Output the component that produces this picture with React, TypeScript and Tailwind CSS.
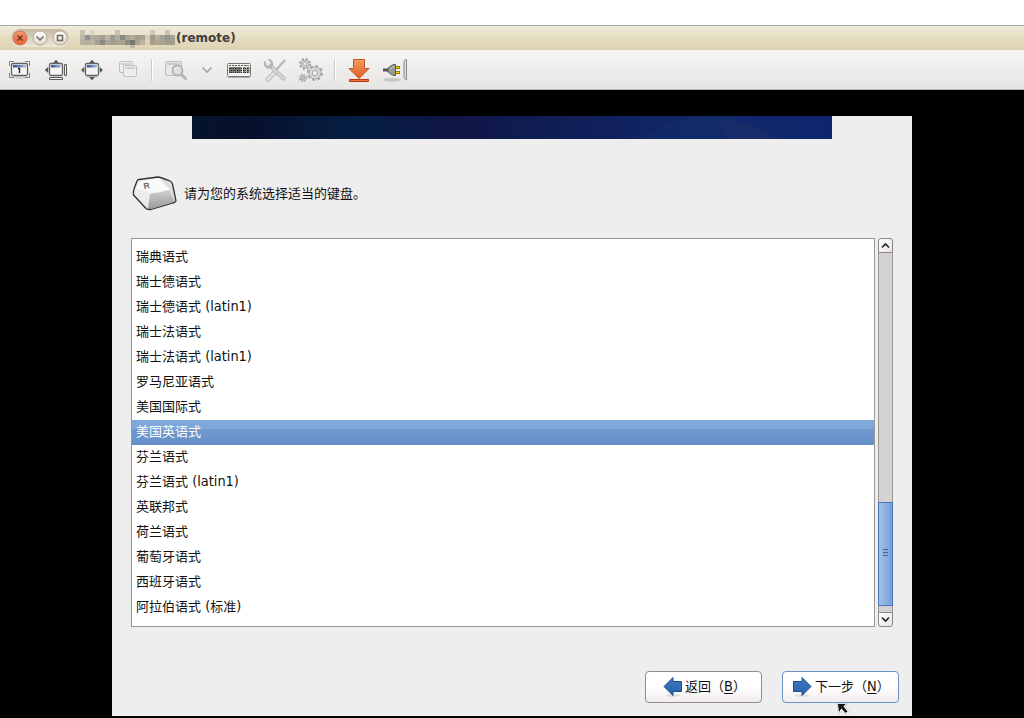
import React from "react";

const FONT = "font-['DejaVu_Sans','Noto_Sans_CJK_SC',sans-serif]";

const layouts = [
  ["瑞典语式"],
  ["瑞士德语式"],
  ["瑞士德语式", "(latin1)"],
  ["瑞士法语式"],
  ["瑞士法语式", "(latin1)"],
  ["罗马尼亚语式"],
  ["美国国际式"],
  ["美国英语式"],
  ["芬兰语式"],
  ["芬兰语式", "(latin1)"],
  ["英联邦式"],
  ["荷兰语式"],
  ["葡萄牙语式"],
  ["西班牙语式"],
  ["阿拉伯语式", "(标准)"],
];
const selected = 7;

const mosaic = [
  ["#c9c3b0", "", "#ddd6c3", "", "", "", "", "#c8c2af", "", "", "", "", "", "", "#ccc6b3", "", "", "#cac3b0", ""],
  ["#bdb7a5", "#8a9294", "#b5ad9b", "#aea898", "#a49e8f", "#beb6a2", "#9a9a92", "#b2a995", "#85898a", "#a9a291", "#b4ac98", "#a29d90", "#a8a291", "#d6cdb4", "#9e9a8d", "#b8af9b", "#a2a198", "#8f9491", "#a7a090"],
  ["#b8b19d", "#b4ad99", "#b9b19c", "#a49f90", "#8b8981", "#aca492", "#a49d8c", "#aaa291", "#aba392", "#8f8c83", "#777671", "#aaa28f", "#bcb39c", "#dcd2b6", "#a49d8c", "#aea692", "#aaa390", "#a19b8c", "#a49d8c"],
  ["", "", "", "", "", "", "", "", "", "", "#c3baa0", "", "", "", "", "", "", "", ""],
];

function Win({ x, y, w, h }: { x: number; y: number; w: number; h: number }) {
  return (
    <g>
      <rect x={x + 0.5} y={y + 0.5} width={w - 1} height={h - 1} rx="1.5" fill="#f4f4f3" stroke="#60635f" strokeWidth="1.3" />
      <rect x={x + 2} y={y + 2} width={w - 4} height="2.5" fill="url(#winbar)" />
    </g>
  );
}

function Ico({ x, w, className = "", children }: { x: number; w: number; className?: string; children: React.ReactNode }) {
  return (
    <svg className={"shrink-0 " + className} width={w} height="26" viewBox={`${x} 57 ${w} 26`}>
      {children}
    </svg>
  );
}

function Gear({ cx, cy, r }: { cx: number; cy: number; r: number }) {
  return (
    <g fill="none" stroke="#a9a9a7">
      <circle cx={cx} cy={cy} r={r} strokeWidth="2.6" strokeDasharray={`${r * 0.42} ${r * 0.3654}`} />
      <circle cx={cx} cy={cy} r={r - 0.8} fill="#d8d8d6" strokeWidth="1" />
      <circle cx={cx} cy={cy} r={r * 0.4} fill="#eeeeec" strokeWidth="1" />
    </g>
  );
}

function Toolbar() {
  return (
    <div className="flex h-10 items-center border-b border-[#b6b4b1] bg-linear-to-b from-[#f6f5f4] to-[#e6e5e3] pl-2">
      <Ico x={8} w={24}>
        <defs>
          <linearGradient id="winbar">
            <stop offset="0" stopColor="#2c4f8f" />
            <stop offset="1" stopColor="#a8c0df" />
          </linearGradient>
        </defs>
        <ellipse cx="20" cy="77.5" rx="8" ry="1.5" fill="#00000018" />
        <path d="M9.5 66V61.5H14M25 61.5h4.5V66M29.5 73v4.5H25M14 77.5H9.500V73" fill="none" stroke="#80827f" />
        <Win x={11} y={63} w={17} h={13} />
        <path d="M18 68.5h1.500V73" fill="none" stroke="#222" strokeWidth="1.4" />
      </Ico>
      <Ico x={44} w={26} className="ml-3">
        <path d="M53.500 63 56 60l2.500 3zM48 67.500 45 70l3 2.500z" fill="#555753" stroke="#555753" strokeWidth=".5" />
        <Win x={49} y={63} w={14} h={13} />
        <path d="M64.500 64.500h2v11h-2zM49.500 77.500h13v2h-13z" fill="#eee" stroke="#5c5f5a" />
      </Ico>
      <Ico x={80} w={24} className="ml-2.5">
        <path d="M89.500 63 92 60l2.500 3zM84 67.500 81.300 70l2.700 2.500zM100 67.500l2.700 2.500-2.700 2.500zM89.500 77.300 92 80l2.500-2.700z" fill="#555753" stroke="#555753" strokeWidth=".5" />
        <ellipse cx="92" cy="77" rx="7" ry="1.2" fill="#00000018" />
        <Win x={85} y={63} w={14} h={13} />
      </Ico>
      <Ico x={118} w={22} className="ml-3.5">
        <g fill="#eeeeec" stroke="#c1c1bf">
          <rect x="119.5" y="61.5" width="13" height="11" rx="1.5" />
          <path d="M121 64h10" stroke="#d0d0ce" strokeWidth="2" />
          <rect x="123.5" y="65.5" width="13" height="11" rx="1.5" />
          <path d="M125 68h10" stroke="#d0d0ce" strokeWidth="2" />
        </g>
      </Ico>
      <div className="ml-[11px] h-[22px] w-0.5 border-r border-white bg-[#cdcbc8]" />
      <Ico x={164} w={26} className="ml-[11px]">
        <g fill="none" stroke="#bcbcba">
          <rect x="165.5" y="61.5" width="16" height="14" rx="1.5" fill="#e8e8e6" />
          <path d="M167 64h13" stroke="#cacac8" strokeWidth="2" />
          <path d="m181.500 74.500 4 4" stroke="#b5b5b3" strokeWidth="3" strokeLinecap="round" />
          <circle cx="177.5" cy="70.5" r="5" fill="#dededc" stroke="#b1b1af" strokeWidth="1.8" />
          <path d="M174.500 70a3 3 0 0 1 3-2.500" stroke="#f7f7f5" />
        </g>
      </Ico>
      <Ico x={200} w={14} className="ml-2.5">
        <path d="m202.500 67.500 4.500 4.500 4.500-4.500" fill="none" stroke="#a6a6a4" strokeWidth="1.7" />
      </Ico>
      <Ico x={226} w={26} className="ml-3">
        <rect x="227.5" y="63.5" width="23" height="13" rx="1" fill="#f2f2f1" stroke="#777975" />
        <path d="M229 65.500h17" stroke="#555" strokeDasharray="2 1" />
        <path d="M229 67h12.500v6H229zM243 67h2.500v6H243zM246.500 67h3v6h-3z" fill="#777975" />
        <path d="M229 68.500h20M229 70.500h20M229 72.500h20" stroke="#333" strokeDasharray="1 1" />
        <path d="M228 77.500h22" stroke="#aaa" />
        <path d="M246 65.500h3" stroke="#55a64b" />
      </Ico>
      <Ico x={262} w={26} className="ml-2.5">
        <g fill="none" strokeLinecap="round">
          <path d="m284.500 60.500-8 9" stroke="#b9b9b7" strokeWidth="2.4" />
          <path d="m276 71.500-8.500 8" stroke="#bdbdbb" strokeWidth="4.5" />
          <path d="m276 71.500-8.500 8" stroke="#e0e0de" strokeWidth="2.7" />
          <path d="m270.500 66 13 12.500" stroke="#b4b4b2" strokeWidth="4.4" />
          <path d="m270.500 66 13 12.500" stroke="#d4d4d2" strokeWidth="2.600" />
          <path d="M265 62.500c-.5 4 3 6 5.500 4.500s2-5.500-1-7" stroke="#b6b6b4" strokeWidth="2.4" />
        </g>
      </Ico>
      <Ico x={298} w={26} className="ml-2.5">
        <Gear cx={305} cy={64} r={4.8} />
        <Gear cx={315} cy={73} r={6.8} />
        <Gear cx={303} cy={78} r={3} />
      </Ico>
      <div className="ml-[10px] h-[22px] w-0.5 border-r border-white bg-[#cdcbc8]" />
      <Ico x={348} w={22} className="ml-3">
        <defs>
          <linearGradient id="orange" x2="0" y2="1">
            <stop offset="0" stopColor="#eca15f" />
            <stop offset="1" stopColor="#e85820" />
          </linearGradient>
        </defs>
        <path d="M353.500 59.500h11v9h4.500l-10 10-10-10h4.500z" fill="url(#orange)" stroke="#c7532a" />
        <path d="M349.500 79.500h19v2h-19z" fill="#ef7443" stroke="#b83710" />
      </Ico>
      <Ico x={382} w={26} className="ml-3">
        <ellipse cx="392" cy="79.8" rx="9" ry="1.7" fill="#00000028" />
        <path d="M383 70h6" stroke="#555753" strokeWidth="3" />
        <path d="M388 68c2-1 3-3.500 7.500-3.500v11c-4.500 0-5.500-2.500-7.500-3.500z" fill="#969894" stroke="#555753" />
        <path d="M390.500 69c2-1 2-2.500 4-2.500" stroke="#ddd" fill="none" />
        <path d="M395.500 67.500h4.500M395.500 72.500h4.500" stroke="#725f00" strokeWidth="3" />
        <path d="M396 67.500h3.500M396 72.500h3.500" stroke="#edd400" strokeWidth="1.3" />
        <path d="M406.500 59.500v20h-1l-1.500-2V62l1.500-2.500z" fill="#ddd" stroke="#888a85" />
      </Ico>
    </div>
  );
}

function TitleBar() {
  return (
    <div className="flex h-[25px] items-center border-t border-[#aaa8a6] bg-linear-to-b from-[#f0ebdc] via-[#e5dcc1] to-[#ddd3b3] pl-2.5">
      <svg width="60" height="20" viewBox="10 28 60 20">
        <defs>
          <linearGradient id="pill" x2="0" y2="1">
            <stop offset="0" stopColor="#c5b9a2" />
            <stop offset="1" stopColor="#eee8d9" />
          </linearGradient>
          <linearGradient id="knob" x2="0" y2="1">
            <stop offset="0" stopColor="#fff" />
            <stop offset="1" stopColor="#ddd8cf" />
          </linearGradient>
          <linearGradient id="close" x2="0" y2="1">
            <stop offset="0" stopColor="#f59a72" />
            <stop offset="1" stopColor="#ed6034" />
          </linearGradient>
        </defs>
        <rect x="11" y="29" width="58" height="18" rx="9" fill="url(#pill)" />
        <circle cx="20" cy="38" r="7" fill="url(#close)" stroke="#bc6a4c" strokeWidth=".8" />
        <circle cx="40" cy="38" r="7" fill="url(#knob)" stroke="#a79d8c" strokeWidth=".8" />
        <circle cx="60" cy="38" r="7" fill="url(#knob)" stroke="#a79d8c" strokeWidth=".8" />
        <g fill="none" stroke="#74695e" strokeWidth="1.5">
          <path d="m17.500 35.500 5 5m0-5-5 5" stroke="#713823" />
          <path d="m36.500 36.500 3.500 3.500 3.500-3.500" />
          <path d="M57.500 35.500h5v5h-5z" />
        </g>
      </svg>
      <svg className="ml-2.5" width="95" height="20" viewBox="0 0 95 20">
        {mosaic.map((row, r) => row.map((c, i) => c && <rect key={`${r}-${i}`} x={i * 5} y={2 + r * 5} width="5" height="5" fill={c} />))}
      </svg>
      <span className="ml-px text-[12px] leading-[16px] font-bold text-[#3f3f3f]">(remote)</span>
    </div>
  );
}

function KeyCap() {
  return (
    <svg width="46" height="38" viewBox="132 175 46 38">
      <defs>
        <linearGradient id="keyfront" x2="0" y2="1">
          <stop offset="0" stopColor="#d2d2d2" />
          <stop offset="1" stopColor="#9a9a9a" />
        </linearGradient>
      </defs>
      <path d="M137 180.500 159 177l13 4 4 21-25 7.500h-4L133.500 194l.5-5z" fill="#e4e4e4" />
      <path d="M138 181.500 134.500 190v4l14 14 1.500-15-10-6z" fill="#ededed" />
      <path d="m150 193.500 19-4 6 12.500-25 7h-2z" fill="url(#keyfront)" />
      <path d="m160 178 11.500 4 4 19-6-11.500z" fill="#dedede" />
      <path d="m139 181.500 20-3.500 11 11.500q-10 3.500-20 4-6-5-14-4z" fill="#fafafa" />
      <path d="M139 179.500 158 177q2 0 12 4 2 1 2.500 3l3.500 17q-1 1.500-3 2l-22 6.500q-3 .5-5-1L133.500 195q-.5-3 .5-6l3-8q.5-1.500 2-1.500z" fill="none" stroke="#333" strokeWidth="1.3" strokeLinejoin="round" />
      <text x="143.500" y="188.5" fontSize="8.5" fontWeight="bold" fill="#6a6a6a" fontFamily="Liberation Sans" transform="rotate(-9 147 185) skewX(0)">R</text>
    </svg>
  );
}

function Arrow({ right = false }: { right?: boolean }) {
  return (
    <svg width="20" height="22" viewBox="0 0 20 22" className="shrink-0">
      <defs>
        <linearGradient id="blue" x2="0" y2="1">
          <stop offset="0" stopColor="#3e78c0" />
          <stop offset="1" stopColor="#2862ac" />
        </linearGradient>
      </defs>
      <ellipse cx="10" cy="19.5" rx="7" ry="1.5" fill="#00000018" />
      <path transform={right ? "matrix(-1 0 0 1 20 0)" : undefined} d="m1 10.500 9-9v4h8.500v10H10v4z" fill="url(#blue)" stroke="#1d4c8c" strokeLinejoin="round" />
    </svg>
  );
}

function Chevron({ down = false }: { down?: boolean }) {
  return (
    <div className={"flex h-[15px] items-center justify-center border border-[#8e8788] bg-linear-to-br from-white to-[#e7e4e5] " + (down ? "rounded-b-[3px]" : "rounded-t-[3px]")}>
      <svg width="9" height="7" viewBox="0 0 9 7">
        <path d={down ? "m1 1.500 3.500 3.500 3.500-3.500" : "m1 5.500 3.500-3.500 3.500 3.500"} fill="none" stroke="#222" strokeWidth="1.6" />
      </svg>
    </div>
  );
}

function Latin({ children }: { children: React.ReactNode }) {
  return <span className="font-['DejaVu_Sans_Condensed','DejaVu_Sans','Noto_Sans_CJK_SC',sans-serif] text-[14.4px] [font-stretch:condensed]">{children}</span>;
}

export default function App() {
  return (
    <div className={"relative flex h-[718px] w-[1024px] flex-col overflow-hidden bg-white pt-[25px] " + FONT}>
      <TitleBar />
      <Toolbar />
      <div className="flex flex-1 justify-center bg-black pt-[26px] pb-0.5">
        <main className="flex w-[800px] flex-col bg-[#eeeeee] text-[13px] text-[#111]">
          <svg className="ml-20 block" width="640" height="23" viewBox="0 0 640 23">
            <defs>
              <linearGradient id="banner">
                <stop offset="0" stopColor="#05142a" />
                <stop offset=".1" stopColor="#07112e" />
                <stop offset=".25" stopColor="#071d42" />
                <stop offset=".4" stopColor="#0e1847" />
                <stop offset=".6" stopColor="#101f58" />
                <stop offset=".8" stopColor="#10286c" />
                <stop offset="1" stopColor="#10266c" />
              </linearGradient>
            </defs>
            <rect width="640" height="23" fill="url(#banner)" />
            <path d="M108 0c5 12 15 20 35 23h100V0z" fill="#051f45" opacity=".25" />
            <path d="M190 0c-8 10 20 5 40 23h72c6-8 6-16 0-23z" fill="#170f45" opacity=".25" />
            <path d="M450 23c15-14 38-22 65-22 30 0 55 9 72 22z" fill="#14306a" opacity=".4" />
            <path d="M525 5c25 0 44 6 60 18h-48z" fill="#2a2e68" opacity=".25" />
          </svg>
          <div className="mt-9 flex h-[38px] items-center pl-5">
            <KeyCap />
            <span className="ml-1.5 leading-[20px]">请为您的系统选择适当的键盘。</span>
          </div>
          <div className="mt-[25px] flex h-[389px] pl-[19px]">
            <ul className="w-[744px] border border-[#9c9596] bg-white pt-[6px]">
              {layouts.map(([name, variant], i) => (
                <li
                  key={i}
                  className={"h-[25px] pl-1 leading-[23px] whitespace-pre " + (i === selected ? "bg-linear-to-b from-[#7ea7da] from-36% via-[#7099d0] via-37% to-[#6690c8] text-white" : "")}
                >
                  {name}
                  {variant === "(latin1)" ? <> <Latin>{variant}</Latin></> : variant ? <> <Latin>(</Latin>标准<Latin>)</Latin></> : null}
                </li>
              ))}
            </ul>
            <div className="ml-[3px] flex w-[15px] flex-col">
              <Chevron />
              <div className="h-[249px] border-x border-[#9c9596] bg-[#d5d2d3]" />
              <div className="flex h-[104px] flex-col items-center justify-center gap-0.5 border border-[#4878b4] bg-linear-to-r from-[#9fc1eb] to-[#76a0d8] pb-[3px]">
                <i className="h-px w-[5px] bg-[#3d6698]" />
                <i className="h-px w-[5px] bg-[#3d6698]" />
                <i className="h-px w-[5px] bg-[#3d6698]" />
              </div>
              <div className="h-[6px] border-x border-[#9c9596] bg-[#d5d2d3]" />
              <Chevron down />
            </div>
          </div>
          <div className="mt-11 flex gap-5 pl-[533px]">
            <button className="flex h-8 w-[117px] items-center rounded-[4px] border border-[#958b8d] bg-linear-to-b from-white from-50% to-[#f1ecee] pl-[17px] whitespace-nowrap">
              <Arrow />
              <span className="ml-[2px]">返回（<Latin><u className="underline-offset-2">B</u></Latin>）</span>
            </button>
            <button className="flex h-8 w-[117px] items-center rounded-[4px] border border-[#6b93c4] bg-linear-to-b from-white from-50% to-[#f1ecee] pl-[9px] whitespace-nowrap">
              <Arrow right />
              <span className="ml-[3px]">下一步（<Latin><u className="underline-offset-2">N</u></Latin>）</span>
            </button>
          </div>
        </main>
      </div>
      <svg className="absolute top-[703px] left-[836px]" width="14" height="13" viewBox="0 0 14 13">
        <path d="M1 1h10L9 3.500l4 5-3 3.500-4-4-3 3.500z" fill="#fff" stroke="#aaa" strokeWidth=".5" />
        <path d="M2 1h7.500L7.500 3.500l4 5-2 1.500-4-4.500L3 9z" fill="#111" />
      </svg>
    </div>
  );
}
